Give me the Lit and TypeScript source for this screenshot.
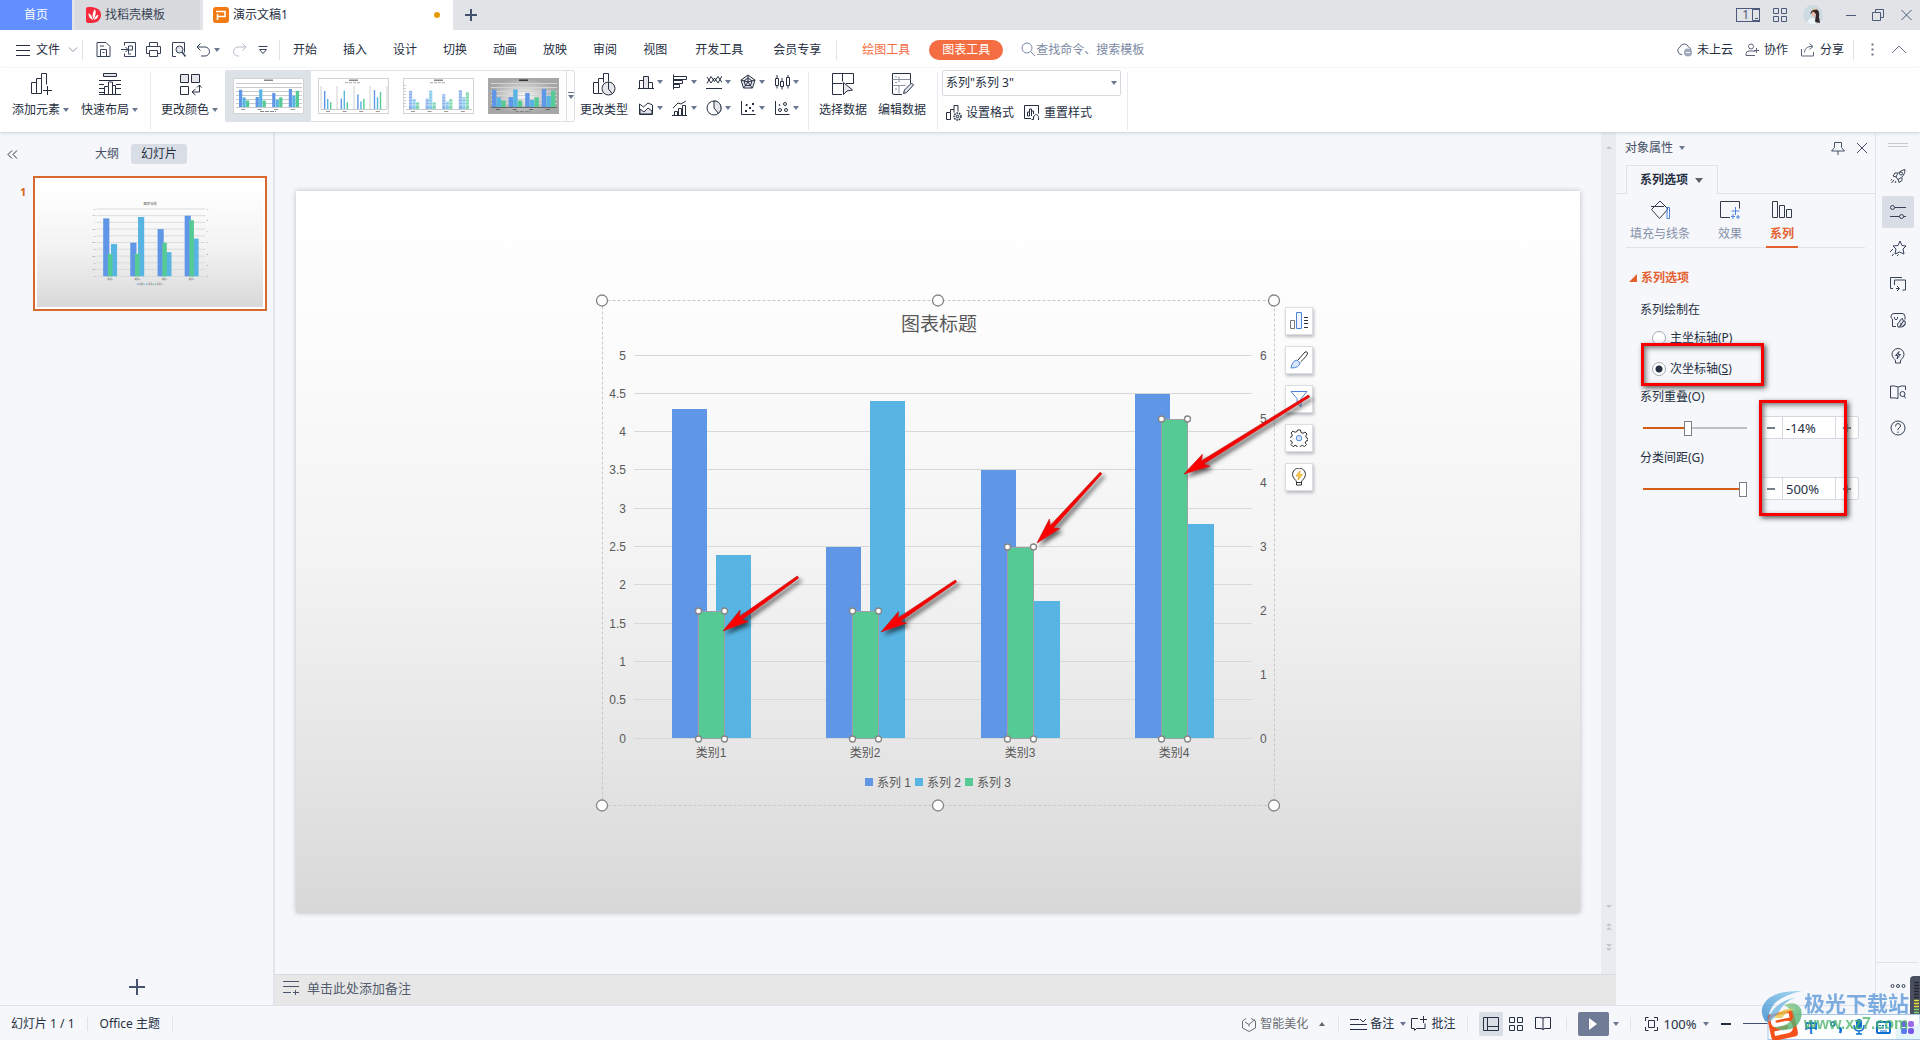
import { LitElement, html, svg, css, nothing } from "lit";
import { customElement, property, state } from "lit/decorators.js";

type Part = unknown;

const icon = (w: number, h: number, body: Part) => html`<svg
  class="ico" width=${w} height=${h} viewBox="0 0 ${w} ${h}"
  fill="none" stroke="currentColor" aria-hidden="true">${body}</svg>`;

const caret = html`<svg class="caret" width="6" height="4" viewBox="0 0 6 4" aria-hidden="true"><path d="M0 0h6L3 4z" fill="#6b7690"/></svg>`;

/* ---------- chart data ---------- */
const CATEGORIES = [
  { name: "类别1", values: [4.3, 2.4, 2] },
  { name: "类别2", values: [2.5, 4.4, 2] },
  { name: "类别3", values: [3.5, 1.8, 3] },
  { name: "类别4", values: [4.5, 2.8, 5] },
];
const SERIES = [
  { name: "系列 1", color: "#6096e6" },
  { name: "系列 2", color: "#58b5e3" },
  { name: "系列 3", color: "#56ca95" },
];

/* Callout arrows in slide coordinates: tail point, then tip point. */
const ARROWS = [
  [502, 386, 427, 440],
  [660, 390, 585, 441],
  [805, 282, 741, 352],
  [1013, 205, 888, 283],
];

@customElement("slide-chart")
export class SlideChart extends LitElement {
  @property({ type: Boolean }) editing = false;

  static styles = css`
    :host { display: block; }
    svg { display: block; width: 100%; height: auto; font-family: "Liberation Sans", "Noto Sans CJK SC", sans-serif; }
    .axis { font-size: 12px; fill: #595959; }
    .title { font-size: 19px; fill: #595959; }
    .grid { stroke: #d7d8d8; stroke-width: 1; }
    .grid.bold { stroke-width: 5; }
    .frame { fill: none; stroke: #c6c8ca; stroke-dasharray: 3 2; }
    .handle { fill: #fff; stroke: #858585; stroke-width: 1.3; }
    .picked { stroke: #9aa0a3; stroke-width: 1; }
  `;

  render() {
    const base = 547.5;
    const y = (v: number, max: number) => base - (v / max) * 383;
    const ticks = Array.from({ length: 11 }, (_, i) => i / 2);
    return html`<svg viewBox="0 0 1284 722" role="img" aria-label="图表标题">
      ${ticks.map((t) => svg`<line class=${this.editing ? "grid" : "grid bold"} x1="338" x2="956" y1=${Math.round(y(t, 5)) - 0.5} y2=${Math.round(y(t, 5)) - 0.5}/>
        <text class="axis" x="330" y=${Math.round(y(t, 5)) + 4} text-anchor="end">${t}</text>`)}
      ${[0, 1, 2, 3, 4, 5, 6].map((t) => svg`<text class="axis" x="964" y=${Math.round(y(t, 6)) + 4}>${t}</text>`)}
      <text class="title" x="643" y="140" text-anchor="middle">图表标题</text>
      ${CATEGORIES.map((c, i) => {
        const x = 376 + Math.floor(i * 154.5);
        const top = Math.round(y(c.values[2], 6));
        return svg`
          <rect x=${x} y=${Math.round(y(c.values[0], 5))} width="35" height=${547 - Math.round(y(c.values[0], 5))} fill=${SERIES[0].color}/>
          <rect x=${x + 44} y=${Math.round(y(c.values[1], 5))} width="35" height=${547 - Math.round(y(c.values[1], 5))} fill=${SERIES[1].color}/>
          <rect class=${this.editing ? "picked" : ""} x=${x + 26.5} y=${top + 0.5} width="26" height=${547 - top} fill=${SERIES[2].color}/>
          <text class="axis" x=${x + 39} y="566" text-anchor="middle">${c.name}</text>
          ${this.editing
            ? [[x + 26.5, top], [x + 52.5, top], [x + 26.5, 548], [x + 52.5, 548]].map(
                ([cx, cy]) => svg`<circle class="handle" cx=${cx} cy=${cy} r="3"/>`)
            : nothing}`;
      })}
      ${SERIES.map((s, i) => svg`<rect x=${569 + i * 50} y="587" width="8" height="8" fill=${s.color}/>
        <text class="axis" x=${581 + i * 50} y="596">${s.name}</text>`)}
      ${this.editing ? svg`
        <rect class="frame" x="306.5" y="109.5" width="672" height="505"/>
        ${[[306, 109.5], [642, 109.5], [978, 109.5], [306, 614.5], [642, 614.5], [978, 614.5]].map(
          ([cx, cy]) => svg`<circle class="handle" cx=${cx} cy=${cy} r="5.5"/>`)}` : nothing}
    </svg>`;
  }
}

@customElement("callout-arrows")
export class CalloutArrows extends LitElement {
  static styles = css`
    :host { display: block; }
    svg { display: block; width: 100%; height: auto; overflow: visible; }
  `;
  render() {
    return html`<svg viewBox="0 0 1284 722" aria-hidden="true">
      <defs><filter id="shade" x="-20%" y="-20%" width="150%" height="160%">
        <feDropShadow dx="3" dy="3" stdDeviation="2" flood-color="#000" flood-opacity="0.6"/></filter></defs>
      ${ARROWS.map(([x1, y1, x2, y2]) => {
        const len = Math.hypot(x2 - x1, y2 - y1);
        const turn = (Math.atan2(y2 - y1, x2 - x1) * 180) / Math.PI;
        return svg`<g filter="url(#shade)"><g transform="translate(${x2} ${y2}) rotate(${turn})">
          <path d="M${-len} -1.2 L-22 -2 L-26 -7 L0 0 L-26 7 L-22 2 L${-len} 1.2Z" fill="#fb0505" stroke="#c01010" stroke-width="0.6" stroke-linejoin="round"/></g></g>`;
      })}
    </svg>`;
  }
}

/* ---------- ribbon gallery previews ---------- */
const preview = (kind: number) => {
  const dark = kind === 3;
  const base = dark ? 29 : kind === 0 ? 29 : 31;
  const span = kind === 1 || kind === 2 ? 21 : 20;
  const w = kind === 1 ? 1.4 : kind === 3 ? 4.4 : 3.2;
  const step = kind === 1 ? 3 : kind === 3 ? 4.6 : 3.5;
  return html`<svg class="preview" width="71" height="36" viewBox="0 0 71 36" aria-hidden="true">
    <defs><radialGradient id="dark"><stop offset="0" stop-color="#fafafa"/><stop offset="1" stop-color="#a6a6a6"/></radialGradient></defs>
    <rect x="0.5" y="0.5" width="70" height="35" fill=${dark ? "url(#dark)" : "#fff"} stroke=${dark ? "#a9a9a9" : "#d3d4d6"}/>
    <rect x="31" y="1.5" width="9" height="1.5" fill=${dark ? "#333" : "#888"}/>
    ${kind === 1 || kind === 2 ? svg`<path d="M27 4.7h16" stroke="#aaa" stroke-dasharray="3 1"/>` : nothing}
    ${kind === 0 || dark ? [5.5, 9.5, 13.5, 17.5, 21.5, 25.5].map((y) => svg`<path d="M3 ${y}h66" stroke=${dark ? "#d4d4d4" : "#c9cacc"}/>`) : nothing}
    ${kind === 1 ? [3, 19, 36, 52, 69].map((x) => svg`<path d="M${x} 8v23" stroke="#d0d0d0"/>`) : nothing}
    ${kind === 2 ? svg`<path d="M2 7v24" stroke="#999" stroke-dasharray="1 2"/>` : nothing}
    <path d="M3 ${base + 0.5}h66" stroke=${dark ? "#666" : "#c9cacc"}/>
    ${CATEGORIES.map((c, i) => c.values.map((v, s) => svg`<rect x=${6 + i * 16.6 + s * step - (dark ? 2 : 0)} y=${base - (v / (s === 2 ? 6.2 : 5)) * span} width=${w} height=${(v / (s === 2 ? 6.2 : 5)) * span} fill=${SERIES[s].color} opacity=${kind === 2 ? 0.75 : 1}/>`))}
    ${kind === 2 ? [12, 15, 18, 21, 24, 27].map((y) => svg`<path d="M5 ${y}h64" stroke="#fff" stroke-width="0.6"/>`) : nothing}
    <path d="M8 ${base + 2.5}h56" stroke=${dark ? "#666" : "#999"} stroke-dasharray="4 12.6"/>
    ${kind === 0 || dark ? svg`<path d="M27 33.5h16" stroke="#888" stroke-dasharray="4 1"/>` : nothing}
  </svg>`;
};

/* ---------- icon bodies ---------- */
const I = {
  docer: html`<svg width="15" height="16" viewBox="0 0 15 16" aria-hidden="true"><path d="M0 2Q0 0 2 0H6Q15 1 15 8T6 16H2Q0 16 0 14Z" fill="#f5283c"/><path d="M7 13Q2 11 2.500 6Q6 8 7 13ZM7.300 12Q5.500 6 9 2Q11 7 7.300 12ZM7.600 13Q9 8.500 12.500 7.500Q12 12 7.600 13Z" fill="#fff"/></svg>`,
  wpp: html`<svg width="16" height="16" viewBox="0 0 16 16" aria-hidden="true"><rect width="16" height="16" rx="3" fill="#f27a12"/><path d="M3 4.500H12V9.500H5M4.500 7V13" fill="none" stroke="#fff" stroke-width="1.600"/></svg>`,
  save: svg`<path d="M2 1.500h9l4 4v10h-13z M5.500 15.500v-7h6v7 M5 5h4 M7.500 11.500h2"/>`,
  exportPdf: svg`<path d="M4.500 4.500v-3h11v14h-11v-3 M1 8.500h7 M5.500 6l2.500 2.500-2.500 2.500 M8.500 12.500v-7.500h4v4h-3.500 M8 13h3"/>`,
  print: svg`<path d="M4.500 5v-3.500h8v3.500 M4.500 12.500h-3v-7h14v7h-3 M4.500 9.500h8v6h-8z"/>`,
  lens: svg`<path d="M6 15.500h-3.500v-14h12v10"/><circle cx="9.500" cy="8.500" r="3.500" fill="#e4e6ea"/><path d="M12 11l3.500 4.500" stroke-width="1.500"/>`,
  undo: svg`<path d="M4.500 1.500l-3.500 3.500 3.500 3.500 M1.500 5h7.500a4.500 4.500 0 0 1 0 9h-4"/>`,
  redo: svg`<path d="M9.500 1.500l3.500 3.500-3.500 3.500 M12.500 5h-7.500a4.500 4.500 0 0 0 0 9h1"/>`,
  custom: svg`<path d="M0.500 1.500h9 M1.500 4.500l3.500 4 3.500-4z"/>`,
  addEl: svg`<path d="M2.500 21.500v-11h5v11z M7.500 10.500v-4h5v15h-5 M12.500 6.500v-5h5v11 M18.500 14v9 M14 18.500h9"/>`,
  layout: svg`<path d="M5.500 1.500h13v3h-13z" fill="#e4e6ea"/><path d="M1 8.500h22 M1 12.500h5 M1 16.500h5 M1 20.500h5 M18 12.500h5 M18 16.500h5 M1 22.500h22 M6.500 22v-7.500h4v8 M10.500 14v-4h4v12 M14.500 13.500h3v9"/>`,
  colors: svg`<path d="M2.500 2.500h8v8h-8z M13.500 2.500h8v8h-8z" fill="#e4e6ea"/><path d="M2.500 14.500h8v8h-8z M21.500 13v7h-7 M17.500 17l-3.500 3 3.500 3 M19 15.500l2.500-2.500 2 2.500"/>`,
  changeType: svg`<path d="M1.500 21.500v-11h5v11z M6.500 10.500v-4h5v4 M6.500 21.500h4 M11.500 7v-5.500h5v8"/><circle cx="16.500" cy="16.500" r="6.500" fill="#e4e6ea"/><path d="M16.500 10v7l4 5"/>`,
  pickData: svg`<path d="M11 22.500h-9.500v-21h21v10 M1.500 11.500h10 M11.500 1.500v8 M15 11.500h7.500"/><path d="M12.500 10.500v12l3.500-3.500 5.500-1z" fill="#e4e6ea"/>`,
  editData: svg`<path d="M12 22.500h-8q-1.500 0-1.500-1.500v-19.500h18v10"/><path d="M2.500 7.500h18 M2.500 13.500h13 M5 5h2 M5 10.500h2 M5 17h2 M9 4.500v6 M9 13.500v8" stroke="#8b93a3"/><path d="M13.500 21.500l1-3.500 7-7 2 2-7 7.500z" fill="#e4e6ea"/>`,
  minis: [
    svg`<path d="M1.500 14.500v-8h4v8z"/><path d="M5.500 14.500v-12h5v12z" fill="#e4e6ea"/><path d="M10.500 14.500v-6h4v6z M0 14.500h16"/>`,
    svg`<path d="M1.500 0.500v15 M1.500 2.500h13v3h-13 M1.500 6.500h9v3h-9 M1.500 10.500h6v3h-6"/>`,
    svg`<path d="M1 9.500l4-7 3.500 5 3.500-5 4 6 M1 3l4 6 3.500-5 3.500 5 4-7 M0 14.500h16"/>`,
    svg`<path d="M8 1l7 5-2.500 8h-9L1 6z" fill="#e4e6ea"/><path d="M8 4l4 3-1.500 4.500h-5L4 7z M8 1v7l7-2 M8 8l4 6 M8 8l-4.500 6 M8 8L1 6"/>`,
    svg`<path d="M1.500 4.500h3v7h-3z M6.500 7.500h3v5h-3z M12.500 3.500h3v8h-3z M3 1v3 M3 11.500v3 M8 4v3 M8 12.500v3 M14 1v2.500 M14 11.500v3"/>`,
    svg`<path d="M1.500 4l4 3 4.500-4 4.500 2v9.500h-13z"/><path d="M2 9l4 3 4-4 4 3v3h-12z" fill="#e4e6ea"/>`,
    svg`<path d="M1 8l5-5 3 1 5-3 M2.500 15.500v-4h3v4 M6.500 15.500v-7h3v7 M10.500 15.500v-10h3v10 M0 15.500h15"/>`,
    svg`<circle cx="8" cy="8" r="7"/><path d="M8 8v-7a7 7 0 0 1 4.500 12.500z" fill="#e4e6ea"/>`,
    svg`<path d="M1.500 1v13.500h14"/><path d="M5 10h2v2h-2z M6 4h1.500v2h-2z M9 7h2v2h-2z M12 3h2v2h-2z M12 10h2v1.500h-2z" fill="currentColor" stroke="none"/>`,
    svg`<path d="M1.500 1v13.500h14"/><circle cx="6" cy="10" r="1.500"/><circle cx="11" cy="4" r="1.500"/><circle cx="12" cy="10" r="1.500"/><circle cx="5.500" cy="5" r="0.500"/>`,
  ],
  format: svg`<path d="M1.500 15.500v-7h4v7z M5.500 8.500v-3h3.500v3 M9 5.500v-4h4v6"/><circle cx="12.500" cy="12.500" r="3.500" fill="#e4e6ea" stroke-dasharray="1.500 1" stroke-width="1.500"/><circle cx="12.500" cy="12.500" r="1.200"/>`,
  reset: svg`<path d="M8 14.500h-6.500v-13h14v8 M4.500 12v-4h2v4z M6.500 8v-3h2v7 M8.500 7h2v3 M10.500 12.500v3h-2 M10.500 14.500c0-5 5-5 5-1v2.500"/>`,
  search: svg`<circle cx="6" cy="6" r="5"/><path d="M10 10l4 4"/>`,
  cloud: svg`<path d="M6 12.500h-1a4 4 0 0 1-1-7.500a4.500 4.500 0 0 1 8.500 0q2.500 1 2.500 3"/><circle cx="12" cy="10.500" r="4" fill="#9fa8ba" stroke="none"/><path d="M10 10.500h4" stroke="#fff"/>`,
  people: svg`<circle cx="6" cy="3.500" r="2.500"/><path d="M1 12.500v-1.500q0-3 3-3h4q2 0 2 1 M1 12.500h9 M11.500 5v5 M9 7.500h5"/>`,
  share: svg`<path d="M1.500 6v7h12v-4 M4.500 9.500q0-5 5.500-6h2.500 M9.500 0.500l3.500 3-3.500 3"/>`,
  rocket: svg`<path d="M6 9q2-6 9-7.500q0 7-7 10z M6 9l-3-1 2-3h3 M8 11l1 3.500 3-2v-3 M2 11l-1 1.500 M4 12l-2.500 3 M6 13l-1 2"/><circle cx="11" cy="5.500" r="1.500"/>`,
  sliders: svg`<circle cx="2.500" cy="3.500" r="2"/><path d="M4.500 3.500h11.500 M0 12.500h9.500 M13.500 12.500h2.500"/><circle cx="11.500" cy="12.500" r="2"/>`,
  star: svg`<path d="M10 1l2 4.500 4 .5-3 3 1 5-4.500-2-4.500 2 1-5-3-3 5-.5z M3 9l-3 3 M3.500 14l-1.500 2 M8.500 14.500l-1.500 1.500"/>`,
  frames: svg`<path d="M3 12.500h-2.500v-11h11.500 M6 12.500h3 M4.500 9v-5h11v10h-3 M7 10l2.500 2.500-2.500 2.500"/>`,
  shop: svg`<path d="M6 14.500h-3.500v-7.500q-2-1-1.500-3q.5-2.500 3-2.500h8q3 0 3 3v3 M4.500 5v1.500q0 1 1.500 1t1.500-1v-1.500"/><path d="M8 15q-1.500-4 1.500-5q.5-3 3-3.500 0 3 2.500 2.500q1.500 5-3.500 6z" fill="#e4e6ea"/><path d="M9.500 15l4-6 M11 11v3 M12 15l3-3"/>`,
  idea: svg`<path d="M5.500 13c0-2-3.500-3-3.500-6.500a6 6 0 0 1 12 0c0 3.500-3.500 4.500-3.500 6.500v2h-5z M9 3.500l-3.500 4h2.500l-1 3.500 3.500-4.500h-2.500z"/>`,
  book: svg`<path d="M8 3v11.500 M8 3q-3-1.500-7.500-1v12q4.500-.5 7.500 .5 M8 3q3-1.500 7.500-1v4"/><circle cx="12.500" cy="10" r="2.500"/><path d="M14 12l2 2.500"/>`,
  help: svg`<circle cx="8" cy="8" r="7"/><path d="M5.500 6.500q0-3 2.500-3t2.500 2.500q0 1-1.500 2t-1 2 M8 11.500v1.500"/>`,
};

const MENU = ["开始", "插入", "设计", "切换", "动画", "放映", "审阅", "视图"];

@customElement("app-root")
export class AppRoot extends LitElement {
  @state() private overlap = -14;
  @state() private gap = 500;

  static styles = css`
    :host {
      display: grid; grid-template-rows: 30px 38px 64px 1fr 35px; height: 100vh; position: relative; overflow: hidden;
      font: 12px/16px "Noto Sans", "Noto Sans CJK SC", sans-serif; color: #262f42; background: #f5f7fa;
    }
    * { box-sizing: border-box; }
    button { font: inherit; color: inherit; background: none; border: 0; padding: 0; margin: 0; display: flex; align-items: center; white-space: nowrap; }
    a { color: inherit; text-decoration: none; }
    svg { flex: none; display: block; }
    .spacer { flex: 1; }
    .sep { width: 1px; background: #dfe2e8; height: 20px; flex: none; }

    /* title bar */
    .titlebar { background: #e1e3e7; display: flex; align-items: stretch; }
    .home { width: 72px; justify-content: center; background: #628fff; color: #fff; margin-right: 3px; }
    .docer { width: 125px; background: #d8dade; padding-left: 11px; gap: 4px; margin-right: 3px; color: #3a4456; }
    .current { width: 250px; background: #fff; padding: 0 13px 0 10px; gap: 4px; }
    .dot { width: 6px; height: 6px; border-radius: 50%; background: #e69b06; }
    .new { padding: 0 12px; color: #43506e; }
    .win { display: flex; align-items: center; color: #4b597a; padding-right: 8px; }
    .one { width: 24px; height: 14px; border: 1px solid; display: flex; justify-content: flex-end; align-items: center; gap: 2px; line-height: 12px; }
    .avatar { margin: 0 10px 0 15px; }
    .grid4 { margin-left: 13px; }

    /* menu row */
    .menubar { background: #fff; display: flex; align-items: center; padding: 1px 14px 0 16px; }
    .file { gap: 6px; }
    .file + .sep { margin-left: 2px; }
    .quick { display: flex; align-items: center; gap: 8px; padding: 0 9px 0 12px; color: #36415a; }
    .quick .undo { gap: 4px; margin-left: 1px; }
    .quick .pale { color: #b6bbc5; margin-left: 5px; }
    .tabs { display: flex; align-items: center; }
    .tabs a { padding: 0 13px; }
    .tabs .wide { padding: 0 15px; }
    .tabs .draw { color: #f56b40; padding: 0 19px 0 25px; }
    .tabs .active { background: #f56d43; color: #fff; border-radius: 10px; line-height: 20px; }
    .search { display: flex; align-items: center; margin-left: 18px; color: #7b88a3; }
    .search input { font: inherit; border: 0; outline: 0; background: none; padding: 0; width: 150px; color: inherit; }
    .search input::placeholder { color: #7b88a3; opacity: 1; }
    .cloud { display: flex; align-items: center; gap: 12px; }
    .cloud button { gap: 5px; }
    .cloud svg { color: #5b667d; }
    .cloud .sep { margin: 0 5px 0 -3px; }

    /* ribbon */
    .ribbon { background: #fff; display: flex; align-items: flex-start; padding: 4px 0 0 12px; box-shadow: 0 1px 3px #c9ccd2; position: relative; z-index: 1; }
    .ribbon > .sep { height: 58px; background: #e9ebef; }
    .big { flex-direction: column; gap: 6px; }
    .big span { display: flex; align-items: center; gap: 3px; }
    .big + .big { margin-left: 12px; }
    .ribbon .tight { margin-left: 11px; }
    .ribbon > .s1 { margin: 0 10px 0 12px; }
    .gallery { display: flex; border: 1px solid #dde0e6; border-radius: 2px; height: 52px; margin: -2px 5px 0 7px; }
    .gallery button { width: 85px; justify-content: center; }
    .gallery .on { background: #dde2e9; }
    .gallery .more { width: 8px; border-left: 1px solid #dde0e6; }
    .minis { display: grid; grid-template-columns: repeat(5, 25px); gap: 10px 9px; padding: 2px 0 0 10px; }
    .minis button { gap: 3px; height: 16px; }
    .ribbon > .s2 { margin: 0 10px 0 9px; }
    .ribbon > .s3 { margin: 0 4px 0 11px; }
    .ribbon > .s4 { margin-left: 6px; }
    .element { display: grid; gap: 8px; margin-top: -2px; }
    select { font: inherit; color: inherit; appearance: none; width: 179px; height: 26px; border: 1px solid #d5d9e0; border-radius: 2px; padding: 0 3px; background: #fff; }
    .pick { position: relative; display: block; }
    .pick .caret { position: absolute; right: 4px; top: 11px; }
    .row { display: flex; gap: 9px; }
    .row button { gap: 4px; }

    /* work area */
    .work { display: grid; grid-template-columns: 275px minmax(0, 1fr) 260px 44px; min-height: 0; }
    .outline { border-right: 2px solid #e2e4ec; display: flex; flex-direction: column; }
    .views { display: flex; align-items: center; padding: 12px 0 0 7px; height: 32px; }
    .views .all { margin-left: 77px; margin-right: 12px; color: #475168; }
    .views .on { background: #d9dee6; border-radius: 3px; padding: 2px 10px; width: 56px; }
    .slides { list-style: none; margin: 12px 0 0; padding: 0 6px 0 20px; flex: 1; }
    .slides li { display: grid; grid-template-columns: 13px 1fr; }
    .slides b { color: #d8661f; padding-top: 8px; font-size: 11px; }
    .thumb { display: block; border: 2px solid #d6692c; padding: 2px; background: #fff; }
    .paper { background: linear-gradient(#fff, #fcfcfc 20%, #f3f3f3 52%, #e6e6e6 77%, #d8d8d8); }
    .add { align-self: center; margin: 0 0 10px; color: #48546f; }

    .center { display: grid; grid-template-columns: 1fr 15px; grid-template-rows: 1fr 31px; min-height: 0; }
    .canvas { display: flex; align-items: center; justify-content: center; padding: 0 21px 2px; }
    .slide { position: relative; width: 100%; box-shadow: 0 0 5px #b9bcc2; }
    .over { position: absolute; inset: 0; pointer-events: none; }
    .tools { position: absolute; left: 77%; top: 16%; display: grid; gap: 11px; }
    .tools button { width: 28px; height: 28px; background: #fff; border: 1px solid #dcdee3; justify-content: center; box-shadow: 1px 2px 3px #b9bbbf; }
    .scroll { background: #e9ebf1; display: flex; flex-direction: column; align-items: center; padding: 12px 0 22px; gap: 13px; }
    .notes { grid-column: 1 / 3; background: #e7e7e7; border-top: 1px solid #d9dbe0; display: flex; align-items: center; padding: 0 8px 4px; gap: 8px; color: #4b556b; }
    .notes input { font: inherit; font-size: 13px; border: 0; padding: 0; background: none; flex: 1; }
    .notes input::placeholder { color: #545d6e; opacity: 1; }

    /* property panel */
    .panel { position: relative; border-right: 1px solid #e0e3e9; }
    .phead { height: 33px; display: flex; align-items: center; padding: 0 7px 2px 9px; gap: 6px; color: #444f66; }
    .phead .pin { margin-right: 5px; }
    .strip { display: flex; }
    .strip::before { content: ""; width: 10px; border-bottom: 1px solid #dfe2e7; }
    .strip::after { content: ""; flex: 1; border-bottom: 1px solid #dfe2e7; }
    .strip button { height: 29px; width: 92px; border: 1px solid #dfe2e7; border-bottom: 0; font-weight: bold; padding-left: 13px; gap: 7px; }
    .facets { display: flex; gap: 20px; margin: 0 10px; box-shadow: inset 0 -1px #dfe2e7; }
    .facets button { flex-direction: column; gap: 6px; padding: 6px 4px 4px; border-bottom: 2px solid transparent; color: #8590a8; }
    .facets svg { color: #333b4a; }
    .facets .on { color: #e4602f; border-color: #e4602f; font-weight: bold; }
    h3 { font: inherit; font-weight: bold; color: #e4602f; margin: 22px 0 0 13px; display: flex; align-items: center; gap: 4px; }
    fieldset { border: 0; margin: 16px 0 0; padding: 0; }
    legend { padding: 0 0 0 24px; }
    .cap { display: block; margin: 11px 0 0 24px; }
    .cap.first { margin-top: 12px; }
    .radio { display: flex; align-items: center; gap: 4px; margin: 12px 0 0 36px; height: 16px; }
    .radio + .radio { margin-top: 15px; }
    input[type="radio"] { appearance: none; width: 14px; height: 14px; margin: 0; border: 1px solid #a5a9b1; border-radius: 50%; background: #fff; }
    input[type="radio"]:checked { background: radial-gradient(circle, #262f42 3px, #fff 4px); }
    .level { display: flex; align-items: center; margin: 11px 0 0 27px; gap: 12px; }
    input[type="range"] { appearance: none; background: none; width: 104px; height: 16px; margin: 0; }
    input[type="range"]::-webkit-slider-runnable-track { height: 2px; background: linear-gradient(90deg, #d45c17 var(--fill), #bdbfc2 var(--fill)); }
    input[type="range"]::-webkit-slider-thumb { appearance: none; width: 8px; height: 15px; margin-top: -6px; background: #fff; border: 1px solid #7c7f86; }
    .spin { display: flex; height: 23px; border: 1px solid #d5d8df; border-radius: 2px; background: #fff; }
    .spin button { width: 22px; justify-content: center; color: #777d8a; }
    .spin input { font: inherit; font-size: 13px; width: 54px; min-width: 0; border: 0; border-left: 1px solid #d5d8df; border-right: 1px solid #d5d8df; padding: 0 3px; color: #262f42; }
    .mark { position: absolute; border: 3px solid #f80000; box-shadow: 2px 2px 5px #555, inset 2px 2px 5px #777; pointer-events: none; }
    .m1 { left: 25px; top: 211px; width: 123px; height: 43px; }
    .m2 { left: 143px; top: 268px; width: 88px; height: 116px; }

    .side { display: flex; flex-direction: column; align-items: center; padding: 11px 1px 0 0; color: #364157; }
    .side .grip { width: 20px; height: 4px; border: solid #c8cbd0; border-width: 1px 0; margin-bottom: 13px; }
    .side button { width: 32px; height: 32px; justify-content: center; margin-bottom: 4px; border-radius: 2px; }
    .side .on { background: #d9dee6; }
    .side .rest { margin: auto 0 11px; height: 32px; align-self: stretch; width: 100%; border-top: 1px solid #dfe2e7; padding-top: 12px; }

    /* status bar */
    .status { border-top: 1px solid #dfe2e8; display: flex; align-items: center; padding: 1px 0 0 11px; }
    .status .sep { height: 14px; margin: 0 11px; }
    .status span + .sep { margin: 0 12px; }
    .status button { gap: 3px; }
    .status .beauty { color: #6c6f75; }
    .views2 { display: flex; gap: 2px; }
    .views2 button { width: 24px; height: 24px; justify-content: center; border-radius: 2px; }
    .views2 .on { background: #d9dee6; }
    .play { background: #707b95; width: 31px; height: 24px; justify-content: center; border-radius: 2px; margin-right: 4px; }
    .zoom { font-size: 13px; }
    .status .line { width: 104px; margin-left: 12px; }
    .status .line::-webkit-slider-runnable-track { height: 1px; background: #445071; }
    .tail { width: 73px; }

    .corner { position: absolute; right: 0; bottom: 0; z-index: 3; pointer-events: none; }
    .site { font: bold 21px "Noto Sans CJK SC", sans-serif; fill: #5b98d8; }
    .url { font: bold 16px "Liberation Sans", sans-serif; fill: #4fb46c; }
    .lang { font: bold 14px "Noto Sans CJK SC", sans-serif; fill: #0a6fd0; }
  `;

  private setOverlap(v: number) { this.overlap = Math.max(-100, Math.min(100, v)); }
  private setGap(v: number) { this.gap = Math.max(0, Math.min(500, v)); }

  private level(id: string, value: number, min: number, max: number, set: (v: number) => void) {
    return html`<div class="level">
      <input id=${id} type="range" min=${min} max=${max} .value=${String(value)}
        style="--fill:${((value - min) / (max - min)) * 100}%"
        @input=${(e: Event) => set(Number((e.target as HTMLInputElement).value))}>
      <div class="spin">
        <button aria-label="减少" @click=${() => set(value - 1)}>${icon(8, 8, svg`<path d="M0 4h8" stroke-width="2"/>`)}</button>
        <input type="text" aria-label="百分比" .value=${value + "%"}
          @change=${(e: Event) => set(parseInt((e.target as HTMLInputElement).value, 10) || 0)}>
        <button aria-label="增加" @click=${() => set(value + 1)}>${icon(8, 8, svg`<path d="M0 4h8M4 0v8" stroke-width="2"/>`)}</button>
      </div>
    </div>`;
  }

  private titlebar() {
    return html`<header class="titlebar">
      <button class="home">首页</button>
      <button class="docer">${I.docer}找稻壳模板</button>
      <button class="current">${I.wpp}演示文稿1<span class="spacer"></span><span class="dot"></span></button>
      <button class="new" aria-label="新建">${icon(12, 12, svg`<path d="M6 0v12M0 6h12" stroke-width="2"/>`)}</button>
      <span class="spacer"></span>
      <div class="win">
        <span class="one">1${icon(8, 12, svg`<path d="M8 0.500h-6.500v11h6.500M4 9.500h3"/>`)}</span>
        <button class="grid4" aria-label="应用">${icon(15, 15, svg`<path d="M0.500 0.500h5v5h-5zM8.500 0.500h5v5h-5zM0.500 8.500h5v5h-5zM8.500 8.500h5v5h-5z"/>`)}</button>
        <svg class="avatar" width="20" height="20" viewBox="0 0 20 20" aria-hidden="true"><circle cx="10" cy="10" r="10" fill="#cddae2"/><path d="M7 9Q9 4 13 4Q17 5 16 12L17 18L12 17L13 9Q10 7 7 9Z" fill="#33262a"/><path d="M9 7Q12 6 12.500 9.500L11.500 12L9 11Z" fill="#eab9a6"/><path d="M4 18Q6 12 11 13L13 19Q8 20 4 18Z" fill="#e9f3f6"/><path d="M9 5l5-1" stroke="#d9b26a"/></svg>
        <span class="sep"></span>
        <button aria-label="最小化">${icon(38, 12, svg`<path d="M12 6.500h10"/>`)}</button>
        <button aria-label="还原">${icon(12, 12, svg`<path d="M0.500 3.500h8v8h-8zM3.500 3.500v-3h8v8h-3"/>`)}</button>
        <button aria-label="关闭">${icon(28, 12, svg`<path d="M17.500 1l10 10M27.500 1l-10 10"/>`)}</button>
      </div>
    </header>`;
  }

  private menubar() {
    return html`<nav class="menubar">
      <button class="file">${icon(14, 12, svg`<path d="M0 1.500h14M0 6.500h14M0 11.500h14"/>`)}文件${icon(14, 6, svg`<path d="M3 0.500l4 4 4-4" stroke="#8c95a8"/>`)}</button>
      <span class="sep"></span>
      <div class="quick">
        <button aria-label="保存">${icon(17, 17, I.save)}</button>
        <button aria-label="输出为PDF">${icon(17, 17, I.exportPdf)}</button>
        <button aria-label="打印">${icon(17, 17, I.print)}</button>
        <button aria-label="打印预览">${icon(17, 17, I.lens)}</button>
        <button class="undo" aria-label="撤销">${icon(14, 16, I.undo)}${caret}</button>
        <button class="pale" aria-label="恢复">${icon(14, 16, I.redo)}</button>
        <button aria-label="自定义快速访问工具栏">${icon(15, 10, svg`<g transform="translate(3 0)">${I.custom}</g>`)}</button>
      </div>
      <span class="sep"></span>
      <div class="tabs">
        ${MENU.map((m) => html`<a href="#">${m}</a>`)}
        <a class="wide" href="#">开发工具</a><a class="wide" href="#">会员专享</a>
        <span class="sep"></span>
        <a class="draw" href="#">绘图工具</a><a class="active" href="#">图表工具</a>
      </div>
      <label class="search">${icon(15, 15, I.search)}<input type="search" aria-label="搜索" placeholder="查找命令、搜索模板"></label>
      <span class="spacer"></span>
      <div class="cloud">
        <button>${icon(16, 15, I.cloud)}未上云</button>
        <button>${icon(14, 14, I.people)}协作</button>
        <button>${icon(15, 14, I.share)}分享</button>
        <span class="sep"></span>
        <button aria-label="更多">${icon(3, 13, svg`<path d="M1.500 0.500v2M1.500 5.500v2M1.500 10.500v2" stroke-width="2" stroke="#6b7488"/>`)}</button>
        <button aria-label="收起功能区">${icon(20, 9, svg`<path d="M6 8l7-7 7 7" stroke="#6b7488"/>`)}</button>
      </div>
    </nav>`;
  }

  private ribbon() {
    const big = (body: Part, label: string, arrow: boolean, cls = "") =>
      html`<button class="big ${cls}">${icon(24, 24, body)}<span>${label}${arrow ? caret : nothing}</span></button>`;
    return html`<section class="ribbon">
      ${big(I.addEl, "添加元素", true)}${big(I.layout, "快速布局", true)}
      <span class="sep s1"></span>
      ${big(I.colors, "更改颜色", true)}
      <div class="gallery">
        ${[0, 1, 2, 3].map((k) => html`<button class=${k === 0 ? "on" : ""} aria-label="样式 ${k + 1}">${preview(k)}</button>`)}
        <button class="more" aria-label="更多样式">${icon(6, 8, svg`<path d="M0 0.500h6" stroke="#6b7690"/><path d="M0 3h6l-3 4z" fill="#6b7690" stroke="none"/>`)}</button>
      </div>
      ${big(I.changeType, "更改类型", false)}
      <div class="minis">${I.minis.map((m, i) => html`<button aria-label="图表类型 ${i + 1}">${icon(16, 16, m)}${caret}</button>`)}</div>
      <span class="sep s2"></span>
      ${big(I.pickData, "选择数据", false)}${big(I.editData, "编辑数据", false, "tight")}
      <span class="sep s3"></span>
      <div class="element">
        <label class="pick"><select aria-label="图表元素"><option>系列"系列 3"</option></select>${caret}</label>
        <div class="row">
          <button>${icon(20, 17, svg`<g transform="translate(3 0)">${I.format}</g>`)}设置格式</button>
          <button>${icon(17, 17, I.reset)}重置样式</button>
        </div>
      </div>
      <span class="sep s4"></span>
    </section>`;
  }

  private panel() {
    return html`<aside class="panel">
      <div class="phead">对象属性${caret}<span class="spacer"></span>
        <button class="pin" aria-label="固定">${icon(14, 14, svg`<path d="M3.500 1.500h7v5l3 3.500h-13l3-3.500zM7 10v4"/>`)}</button>
        <button aria-label="关闭">${icon(12, 12, svg`<path d="M1 1l10 10M11 1L1 11"/>`)}</button></div>
      <div class="strip"><button>系列选项<svg width="8" height="5" viewBox="0 0 8 5"><path d="M0 0h8L4 5z" fill="#5c6069"/></svg></button></div>
      <div class="facets">
        <button>${icon(20, 20, svg`<path d="M1.500 9.500L10 1l8 8-8.500 9.500z M1 6.500h13"/><path d="M17 7.500h2.500v11h-2.500z" stroke="#4f86dc"/>`)}填充与线条</button>
        <button>${icon(20, 20, svg`<path d="M10 17.500h-9.500v-16h19v7"/><path d="M15.500 7v8M11.500 11h8M13 14v5M11 16.500h4M18 15v4M16 17h4" stroke="#4f86dc"/>`)}效果</button>
        <button class="on">${icon(20, 20, svg`<path d="M0.500 1.500h5v16h-5zM7.500 5.500h5v12h-5zM14.500 9.500h5v8h-5z"/>`)}系列</button>
      </div>
      <h3><svg width="8" height="8" viewBox="0 0 8 8"><path d="M8 0v8H0z" fill="#e4602f"/></svg>系列选项</h3>
      <fieldset>
        <legend>系列绘制在</legend>
        <label class="radio"><input type="radio" name="axis">主坐标轴(P)</label>
        <label class="radio"><input type="radio" name="axis" checked><span>次坐标轴(<u>S</u>)</span></label>
      </fieldset>
      <label class="cap first" for="overlap">系列重叠(O)</label>
      ${this.level("overlap", this.overlap, -100, 100, (v) => this.setOverlap(v))}
      <label class="cap" for="gap">分类间距(G)</label>
      ${this.level("gap", this.gap, 0, 500, (v) => this.setGap(v))}
      <span class="mark m1"></span><span class="mark m2"></span>
    </aside>`;
  }

  private tri(d: string) {
    return html`<svg width="6" height="8" viewBox="0 0 6 8" aria-hidden="true"><path d=${d} fill="#c3c7d0"/></svg>`;
  }

  private center() {
    const tool = (label: string, body: Part) => html`<button aria-label=${label}>${icon(18, 18, body)}</button>`;
    return html`<main class="center">
      <div class="canvas"><div class="slide paper">
        <slide-chart editing></slide-chart>
        <div class="tools">
          ${tool("图表元素", svg`<path d="M0.500 8.500h4v8h-4z" stroke="#777"/><path d="M6.500 0.500h5v16h-5z" stroke="#4f86dc" fill="#eef4fd"/><path d="M14 5.500h5M14 8.500h5M14 11.500h5M14 15.500h5" stroke="#333"/>`)}
          ${tool("图表样式", svg`<path d="M1 17q1-7 6-8l3 3q-1 5-9 5z" fill="#d8e6fb" stroke="#4f86dc"/><path d="M8 9l7-8q2-1 2.500 1t-7 9" stroke="#333"/>`)}
          ${tool("图表筛选器", svg`<path d="M1 1.500h16l-6 7v8l-4-3v-5z" stroke="#4f86dc"/>`)}
          ${tool("设置", svg`<path d="M7.500 1h3l.5 2.500 2 .8 2-1.300 2 2-1.300 2 .8 2 1.500.5v2l-2 .5-.8 2 1.300 1.500-2 2.200-2-1.400-2 .8-.5 2h-2.500l-.5-2-2-.8-2 1.400-2-2.200 1.300-1.500-.8-2-2-.5v-3l2-.5.8-2-1.300-2 2-2 2 1.300 2-.8z" stroke="#333"/><circle cx="9" cy="9.200" r="2.700" stroke="#4f86dc" fill="#d8e6fb"/>`)}
          ${tool("智能", svg`<path d="M6.500 14c0-2-4-3.500-4-7.500a6.500 6.500 0 0 1 13 0c0 4-4 5.500-4 7.500v3h-5zM6.500 14.500h5" stroke="#333"/><path d="M10 3l-4 5h3l-1 4 4.500-5.500h-3z" fill="#ffd35a" stroke="#e5a020" stroke-width="0.800"/>`)}
        </div>
        <callout-arrows class="over"></callout-arrows>
      </div></div>
      <div class="scroll">${this.tri("M0 5h6L3 2z")}<span class="spacer"></span>${this.tri("M0 3h6L3 6z")}${this.tri("M0 3h6L3 0zM0 7h6L3 4z")}${this.tri("M0 0h6L3 3zM0 4h6L3 7z")}</div>
      <div class="notes">${icon(16, 14, svg`<path d="M0 0.500h16M0 5.500h16M0 11.500h8M12.500 9v5M10 11.500h6"/>`)}<input type="text" aria-label="备注" placeholder="单击此处添加备注"></div>
    </main>`;
  }

  private side() {
    const items = [I.rocket, I.sliders, I.star, I.frames, I.shop, I.idea, I.book, I.help];
    const names = ["快捷", "属性", "动画", "切换", "素材", "灵感", "文档", "帮助"];
    return html`<nav class="side"><span class="grip"></span>
      ${items.map((b, i) => html`<button class=${i === 1 ? "on" : ""} aria-label=${names[i]}>${icon(16, 16, b)}</button>`)}
      <button class="rest" aria-label="更多">${icon(16, 14, svg`<circle cx="2.500" cy="8" r="1.500"/><circle cx="8" cy="8" r="1.500"/><circle cx="13.500" cy="8" r="1.500"/>`)}</button>
    </nav>`;
  }

  private status() {
    return html`<footer class="status">
      <span>幻灯片 1 / 1</span><span class="sep"></span><span>Office 主题</span><span class="sep"></span>
      <span class="spacer"></span>
      <button class="beauty">${icon(16, 16, svg`<path d="M5 2.500L1.500 5v7l6.500 3.500 6.500-3.500v-7L10 2.500M4 6l4 2.500 6-5M8 8.500v2"/>`)}智能美化<svg width="16" height="4" viewBox="0 0 16 4"><path d="M8 4h6L11 0z" fill="#666"/></svg></button>
      <span class="sep"></span>
      <button>${icon(17, 14, svg`<path d="M0 2.500h9M0 7.500h17M0 12.500h17M10 2l3 3 3-3"/>`)}备注&nbsp;${caret}</button>
      <button>${icon(22, 15, svg`<path d="M12 2.500h-6.500v10h3v2l2-2h8.500v-5M17.500 0v7M14 3.500h7"/>`)}批注</button>
      <span class="sep"></span>
      <div class="views2">
        <button class="on" aria-label="普通视图">${icon(16, 14, svg`<path d="M0.500 0.500h15v13h-15zM4.500 0.500v13M4.500 9.500h11"/>`)}</button>
        <button aria-label="幻灯片浏览">${icon(15, 14, svg`<path d="M0.500 0.500h5v5h-5zM8.500 0.500h5v5h-5zM0.500 8.500h5v5h-5zM8.500 8.500h5v5h-5z"/>`)}</button>
        <button aria-label="阅读视图">${icon(16, 15, svg`<path d="M8 1.500v12M8 2q-3-1-7.500-.5v11h5.500q2 0 2 1.500 0-1.500 2-1.500h5.500v-11q-4.500-.5-7.500 .5"/>`)}</button>
      </div>
      <span class="sep"></span>
      <button class="play" aria-label="放映">${icon(10, 12, svg`<path d="M1 0l8 6-8 6z" fill="#fff" stroke="none"/>`)}</button>${caret}
      <span class="sep"></span>
      <button aria-label="适应窗口">${icon(22, 14, svg`<path d="M3.500 4v-3.500h3M12 0.500h3.500v3.500M15.500 10v3.500h-3.500M6.500 13.500h-3v-3.500M6.500 3.500h6v7h-6z"/>`)}</button>
      <button class="zoom">100%&nbsp;${caret}</button>
      <button aria-label="缩小">${icon(22, 4, svg`<path d="M12 2h10" stroke-width="2"/>`)}</button>
      <input class="line" type="range" aria-label="显示比例" min="0" max="200" value="100">
      <span class="tail"></span>
    </footer>`;
  }

  private corner() {
    return html`<svg class="corner" width="160" height="66" viewBox="0 0 160 66" aria-hidden="true">
      <defs>
        <linearGradient id="sky" x1="0" y1="1" x2="1" y2="0"><stop offset="0" stop-color="#2f86cc"/><stop offset="1" stop-color="#8fd0f0"/></linearGradient>
        <linearGradient id="leaf" x1="0" y1="0" x2="1" y2="1"><stop offset="0" stop-color="#9bd48e"/><stop offset="1" stop-color="#38a56a"/></linearGradient>
      </defs>
      <path d="M150 42V6q0-4 4-4h6v40z" fill="#4b5060"/>
      ${Array.from({ length: 11 }, (_, i) => svg`<path d="M154 ${8.5 + i * 3}h5" stroke=${i < 6 ? "#252833" : i < 9 ? "#e6df3e" : "#7ed66a"} stroke-width="1.5"/>`)}
      <path d="M8 40.500h152v25h-152z" fill="#fdfeff" stroke="#a5c4e6"/>
      <path d="M136 65V54q12 0 24-4v15z" fill="#e3f5fb"/>
      <g transform="rotate(-12 22 51)"><rect x="9" y="38" width="27" height="27" rx="4" fill="#f4511b"/><path d="M31 43H18q-4 0-4 3.500t4 3.500h8q4 0 4 4t-4 4H13" fill="none" stroke="#fff" stroke-width="4.500"/></g>
      <text class="lang" x="44" y="58">中</text>
      <circle cx="73" cy="50" r="2" fill="none" stroke="#0a6fd0" stroke-width="1.500"/><path d="M79 54q3 0 1 5" stroke="#0a6fd0" stroke-width="2.500" fill="none"/>
      <rect x="96" y="45" width="6" height="10" rx="3" fill="#0a6fd0"/><path d="M94 51q0 6 5 6t5-6M99 57v3M96 60h6" stroke="#0a6fd0" fill="none" stroke-width="1.500"/>
      <rect x="117" y="48" width="13" height="11" rx="1" fill="none" stroke="#0a6fd0" stroke-width="2"/><path d="M119 51.500h9M119 54h9" stroke="#0a6fd0" stroke-dasharray="2 1"/><path d="M120 57h7" stroke="#0a6fd0"/>
      <rect x="141" y="47" width="6" height="6" rx="2" fill="#6b63e8"/><rect x="148" y="47" width="6" height="6" rx="2" fill="#9b6bea"/><rect x="141" y="54" width="6" height="6" rx="2" fill="#5a7bf0"/><rect x="148" y="54" width="6" height="6" rx="2" fill="#7a5ce6"/>
      <g opacity="0.780">
        <path d="M5 47Q-3 34 9 24Q21 16 42 17Q24 21 15 29Q8 37 8 48Z" fill="url(#sky)"/>
        <path d="M8 48Q10 30 36 23Q24 28 20 36Q14 46 8 48Z" fill="#6fb7e4"/>
        <path d="M24 31Q36 26 41 35Q44 49 31 55Q20 58 14 53Q29 52 33 44Q34 36 24 31Z" fill="url(#leaf)"/>
        <path d="M14 44Q22 33 34 35Q26 38 22 44Z" fill="#e9c64a"/>
        <text class="site" x="44" y="37">极光下载站</text>
        <text class="url" x="44" y="55">www.xz7.com</text>
      </g>
    </svg>`;
  }

  render() {
    return html`
      ${this.titlebar()}${this.menubar()}${this.ribbon()}
      <div class="work">
        <aside class="outline">
          <div class="views">
            <button aria-label="收起">${icon(11, 9, svg`<path d="M5 0.500l-4 4 4 4M10 0.500l-4 4 4 4"/>`)}</button>
            <button class="all">大纲</button><button class="on">幻灯片</button>
          </div>
          <ol class="slides"><li><b>1</b><a class="thumb" href="#" aria-label="幻灯片 1"><slide-chart class="paper"></slide-chart></a></li></ol>
          <button class="add" aria-label="新建幻灯片">${icon(16, 16, svg`<path d="M8 0v16M0 8h16" stroke-width="2"/>`)}</button>
        </aside>
        ${this.center()}${this.panel()}${this.side()}
      </div>
      ${this.status()}${this.corner()}`;
  }
}
